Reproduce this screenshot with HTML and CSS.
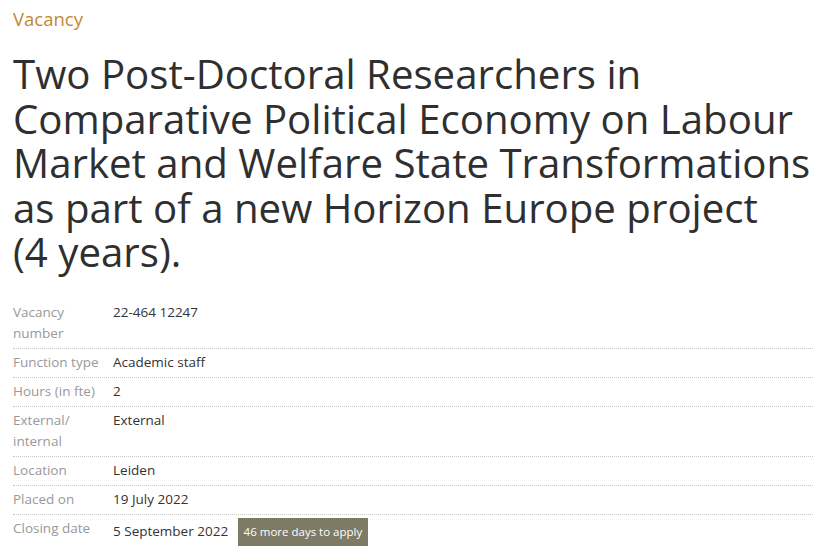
FILE: index.html
```html
<!DOCTYPE html>
<html lang="en">
<head>
<meta charset="utf-8">
<title>Vacancy</title>
<link rel="stylesheet" href="styles.css">
</head>
<body>
<main class="page">
  <p class="kicker">Vacancy</p>
  <h1 class="title">Two Post-Doctoral Researchers in Comparative Political Economy on Labour Market and Welfare State Transformations as part of a new Horizon Europe project (4&nbsp;years).</h1>
  <dl class="facts">
    <div class="row"><dt>Vacancy number</dt><dd>22-464 12247</dd></div>
    <div class="row"><dt>Function type</dt><dd>Academic staff</dd></div>
    <div class="row"><dt>Hours (in fte)</dt><dd>2</dd></div>
    <div class="row"><dt>External/ internal</dt><dd>External</dd></div>
    <div class="row"><dt>Location</dt><dd>Leiden</dd></div>
    <div class="row"><dt>Placed on</dt><dd>19 July 2022</dd></div>
    <div class="row"><dt>Closing date</dt><dd>5 September 2022 <span class="badge">46 more days to apply</span></dd></div>
  </dl>
</main>
</body>
</html>
```
FILE: styles.css
```css
html, body {
  margin: 0;
  padding: 0;
  background: #fff;
}
body {
  font-family: "Open Sans", "Noto Sans", sans-serif;
  color: #333;
}
.page {
  padding: 6px 15px 0 13px;
}
.kicker {
  margin: 0;
  font-size: 18.5px;
  line-height: 26px;
  color: #c5872f;
}
.title {
  margin: 20px -10px 24px 0;
  font-weight: 400;
  font-size: 40.2px;
  line-height: 44.5px;
  letter-spacing: 0;
  color: #2f2f2f;
}
.facts {
  margin: 0;
  font-size: 13.5px;
  line-height: 21px;
}
.row {
  display: flex;
  padding: 3.5px 0;
  border-bottom: 1px dotted #c8c8c8;
}
.row:last-child {
  border-bottom: none;
}
.row dt {
  width: 100px;
  flex: none;
  color: #999;
}
.row dd {
  margin: 0;
  color: #333;
}
.badge {
  display: inline-block;
  margin-left: 6px;
  padding: 3px 6px;
  background: #7d7a66;
  color: #fff;
  font-size: 11.5px;
  line-height: 22px;
}
```
